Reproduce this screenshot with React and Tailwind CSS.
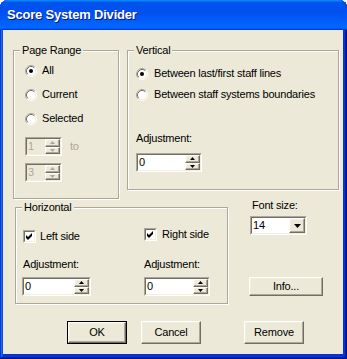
import React from "react";

const OUT_SUNK = "border border-t-[#ACA899] border-l-[#ACA899] border-r-white border-b-white";
const IN_SUNK = "border border-t-[#716F64] border-l-[#716F64] border-r-[#F1EFE2] border-b-[#F1EFE2]";
const RAISED = "border border-t-white border-l-white border-b-[#716F64] border-r-[#716F64] shadow-[inset_-1px_-1px_0_#ACA899,inset_1px_1px_0_#F1EFE2]";

function Radio({ checked }) {
  return (
    <svg width="12" height="12" viewBox="0 0 12 12" className="shrink-0">
      <circle cx="6" cy="6" r="5" fill="#fff" />
      <path d="M2.11 9.89 A5.5 5.5 0 0 1 9.89 2.11" stroke="#ACA899" fill="none" />
      <path d="M9.89 2.11 A5.5 5.5 0 0 1 2.11 9.89" stroke="#fff" fill="none" />
      <path d="M2.82 9.18 A4.5 4.5 0 0 1 9.18 2.82" stroke="#716F64" fill="none" />
      <path d="M9.18 2.82 A4.5 4.5 0 0 1 2.82 9.18" stroke="#F1EFE2" fill="none" />
      {checked && <circle cx="6" cy="6" r="2" fill="#000" />}
    </svg>
  );
}

function Check() {
  return (
    <div className={`w-[13px] h-[13px] shrink-0 ${OUT_SUNK}`}>
      <div className={`w-full h-full bg-white flex items-center justify-center ${IN_SUNK}`}>
        <svg width="7" height="7" viewBox="0 0 7 7">
          <path d="M0 2 L2 4 L6 0 L6 3 L2 7 L0 5 Z" fill="#000" />
        </svg>
      </div>
    </div>
  );
}

function Arrow({ up, color }) {
  return (
    <svg width="5" height="3" viewBox="0 0 5 3">
      {up ? (
        <path d="M0 3 L2.5 0 L5 3 Z" fill={color} />
      ) : (
        <path d="M0 0 L5 0 L2.5 3 Z" fill={color} />
      )}
    </svg>
  );
}

function SpinBtn({ up, disabled }) {
  return (
    <div className={`flex-1 flex items-center justify-center bg-[#ECE9D8] ${RAISED}`}>
      <Arrow up={up} color={disabled ? "#ACA899" : "#000"} />
    </div>
  );
}

function Spin({ value, disabled, className }) {
  return (
    <div className={`h-[19px] ${OUT_SUNK} ${className}`}>
      <div className={`h-full flex ${IN_SUNK} ${disabled ? "bg-[#ECE9D8]" : "bg-white"}`}>
        <div className={`flex-1 pl-[1px] flex items-center ${disabled ? "text-[#ACA899]" : "text-black"}`}>{value}</div>
        <div className="w-[15px] flex flex-col">
          <SpinBtn up disabled={disabled} />
          <SpinBtn disabled={disabled} />
        </div>
      </div>
    </div>
  );
}

function Group({ label, className, children }) {
  return (
    <div className={`relative border border-[#ACA899] shadow-[1px_1px_0_#fff,inset_1px_1px_0_#fff] ${className}`}>
      <span className="absolute left-[6px] top-[-7px] px-[2px] bg-[#ECE9D8] leading-[13px]">{label}</span>
      {children}
    </div>
  );
}

function Btn({ children, def, className }) {
  if (def) {
    return (
      <div className={`border border-black ${className}`}>
        <div className={`w-full h-full flex items-center justify-center ${RAISED}`}>{children}</div>
      </div>
    );
  }
  return <div className={`flex items-center justify-center ${RAISED} ${className}`}>{children}</div>;
}

export default function App() {
  return (
    <div className="w-[347px] h-[359px] bg-white font-['Liberation_Sans',Arial,sans-serif]">
      <div className="w-[347px] h-[359px] flex flex-col rounded-t-[8px] overflow-hidden bg-[#0831d9] shadow-[inset_-1px_-1px_#00138c,inset_1px_1px_#0831d9,inset_-2px_-2px_#001ea0,inset_2px_2px_#166aee,inset_-3px_-3px_#003bda,inset_3px_3px_#0855dd]">
        <div className="h-[30px] shrink-0 flex items-center pl-[7px] pb-[1px] bg-[linear-gradient(180deg,#0997ff_0%,#0053ee_8%,#0050ee_40%,#0066ff_88%,#0066ff_93%,#005bff_95%,#003dd7_96%,#003dd7_100%)] text-white font-bold text-[13px] tracking-[-0.2px] [text-shadow:1px_1px_0_#0a1883]">
          Score System Divider
        </div>
        <div className="flex-1 ml-[3px] mr-[4px] mb-[5px] bg-[#ECE9D8] text-[11px] leading-[13px] tracking-[-0.2px] text-black flex flex-col">
          {/* Row A */}
          <div className="flex items-start pt-[20px] pl-[10px] gap-[8px]">
            <Group label="Page Range" className="w-[106px] h-[149px]">
              <div className="flex flex-col pt-[13px] pl-[11px]">
                <div className="flex flex-col gap-[11px]">
                  <div className="flex items-center h-[13px] gap-[5px]"><Radio checked /><span>All</span></div>
                  <div className="flex items-center h-[13px] gap-[5px]"><Radio /><span>Current</span></div>
                  <div className="flex items-center h-[13px] gap-[5px]"><Radio /><span>Selected</span></div>
                </div>
                <div className="flex items-center mt-[12px]">
                  <Spin value="1" disabled className="w-[37px]" />
                  <span className="ml-[8px] text-[#ACA899]">to</span>
                </div>
                <div className="flex items-center mt-[7px]">
                  <Spin value="3" disabled className="w-[37px]" />
                </div>
              </div>
            </Group>
            <Group label="Vertical" className="w-[212px] h-[140px]">
              <div className="flex flex-col pt-[16px] pl-[8px]">
                <div className="flex flex-col gap-[8px]">
                  <div className="flex items-center h-[13px] gap-[6px]"><Radio checked /><span>Between last/first staff lines</span></div>
                  <div className="flex items-center h-[13px] gap-[6px]"><Radio /><span>Between staff systems boundaries</span></div>
                </div>
                <div className="mt-[31px] h-[13px]">Adjustment:</div>
                <Spin value="0" className="w-[66px] mt-[8px]" />
              </div>
            </Group>
          </div>
          {/* Row B */}
          <div className="flex items-start pl-[12px]">
            <Group label="Horizontal" className="w-[213px] h-[97px] mt-[8px]">
              <div className="flex pl-[7px]">
                <div className="flex flex-col pt-[22px] w-[121px]">
                  <div className="flex items-center h-[13px] gap-[4px]"><Check /><span>Left side</span></div>
                  <div className="mt-[15px] h-[13px]">Adjustment:</div>
                  <Spin value="0" className="w-[69px] mt-[6px] -ml-[1px]" />
                </div>
                <div className="flex flex-col pt-[20px]">
                  <div className="flex items-center h-[13px] gap-[5px]"><Check /><span>Right side</span></div>
                  <div className="mt-[17px] h-[13px]">Adjustment:</div>
                  <Spin value="0" className="w-[66px] mt-[6px]" />
                </div>
              </div>
            </Group>
            <div className="flex flex-col ml-[22px]">
              <div className="h-[13px] pl-[2px]">Font size:</div>
              <div className={`w-[57px] h-[19px] mt-[4px] ${OUT_SUNK}`}>
                <div className={`h-full flex bg-white ${IN_SUNK}`}>
                  <div className="flex-1 pl-[1px] flex items-center">14</div>
                  <div className={`w-[16px] flex items-center justify-center bg-[#ECE9D8] ${RAISED}`}>
                    <svg width="7" height="4" viewBox="0 0 7 4"><path d="M0 0 L7 0 L3.5 4 Z" fill="#000" /></svg>
                  </div>
                </div>
              </div>
              <Btn className="w-[74px] h-[19px] mt-[42px] -ml-[1px]">Info...</Btn>
            </div>
          </div>
          {/* Row C */}
          <div className="flex pl-[64px] mt-[17px]">
            <Btn def className="w-[60px] h-[23px]">OK</Btn>
            <Btn className="w-[60px] h-[23px] ml-[14px]">Cancel</Btn>
            <Btn className="w-[60px] h-[23px] ml-[43px]">Remove</Btn>
          </div>
        </div>
      </div>
    </div>
  );
}
